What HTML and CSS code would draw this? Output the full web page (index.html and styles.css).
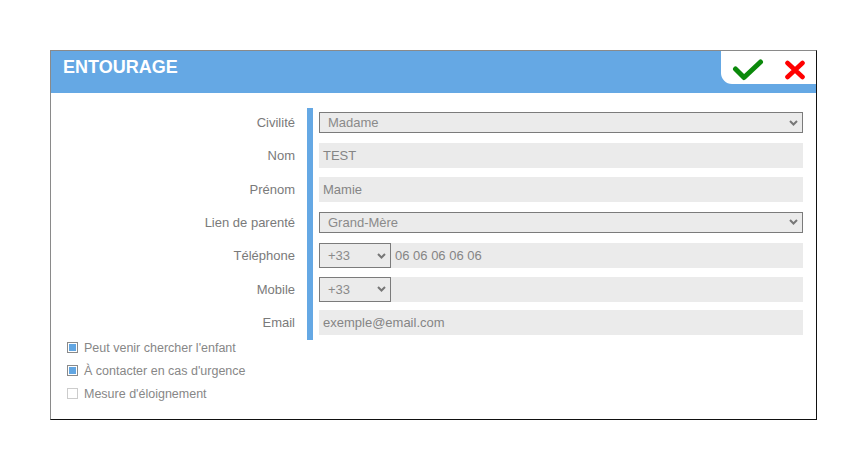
FILE: index.html
```html
<!DOCTYPE html>
<html lang="fr">
<head>
<meta charset="utf-8">
<title>Entourage</title>
<link rel="stylesheet" href="styles.css">
</head>
<body>
<div class="panel">
  <div class="header">
    <div class="title">ENTOURAGE</div>
    <div class="tab">
      <svg class="ico-ok" width="32" height="22" viewBox="0 0 32 22"><path d="M3.5 10 L12 18.5 L28.5 3" fill="none" stroke="#0b890b" stroke-width="5" stroke-linecap="round" stroke-linejoin="round"/></svg>
      <svg class="ico-no" width="22" height="20" viewBox="0 0 22 20"><path d="M3.5 3 L18.5 17 M18.5 3 L3.5 17" fill="none" stroke="#ff0000" stroke-width="4.6" stroke-linecap="round"/></svg>
    </div>
  </div>
  <div class="form">
    <div class="labels">
      <div class="lbl">Civilité</div>
      <div class="lbl">Nom</div>
      <div class="lbl">Prénom</div>
      <div class="lbl">Lien de parenté</div>
      <div class="lbl">Téléphone</div>
      <div class="lbl">Mobile</div>
      <div class="lbl">Email</div>
    </div>
    <div class="bar"></div>
    <div class="fields">
      <div class="row"><div class="sel sel-full">Madame</div></div>
      <div class="row"><div class="inp">TEST</div></div>
      <div class="row"><div class="inp">Mamie</div></div>
      <div class="row"><div class="sel sel-full">Grand-Mère</div></div>
      <div class="row"><div class="sel sel-code">+33</div><div class="inp">06 06 06 06 06</div></div>
      <div class="row"><div class="sel sel-code">+33</div><div class="inp"></div></div>
      <div class="row"><div class="inp">exemple@email.com</div></div>
    </div>
  </div>
  <div class="checks">
    <div class="check"><span class="box on"></span><span class="ctext">Peut venir chercher l'enfant</span></div>
    <div class="check"><span class="box on"></span><span class="ctext">À contacter en cas d'urgence</span></div>
    <div class="check"><span class="box"></span><span class="ctext">Mesure d'éloignement</span></div>
  </div>
</div>
</body>
</html>
```
FILE: styles.css
```css
html, body {
  margin: 0;
  padding: 0;
  background: #ffffff;
}
body {
  font-family: "Liberation Sans", Arial, sans-serif;
}
.panel {
  margin: 50px 0 0 50px;
  width: 765px;
  height: 368px;
  border: 1px solid;
  border-color: #8a8a8a #111111 #111111 #8a8a8a;
  background: #ffffff;
}
.header {
  height: 42px;
  background: #65a8e4;
  display: flex;
  justify-content: space-between;
  align-items: flex-start;
}
.title {
  color: #ffffff;
  font-weight: bold;
  font-size: 18px;
  line-height: 20px;
  padding: 6px 0 0 12px;
  letter-spacing: 0;
}
.tab {
  width: 95px;
  height: 33px;
  box-sizing: border-box;
  background: #ffffff;
  border-bottom-left-radius: 11px;
  display: flex;
  align-items: center;
  padding: 4px 0 0 11px;
  gap: 20px;
}
.tab svg { display: block; }
.form {
  display: flex;
  padding: 15px 13px 0 0;
}
.labels {
  width: 244px;
  display: flex;
  flex-direction: column;
  gap: 8.33px;
  padding-top: 2px;
}
.lbl {
  height: 25px;
  display: flex;
  align-items: center;
  justify-content: flex-end;
  font-size: 13px;
  color: #7a7a7a;
}
.bar {
  width: 6px;
  background: #65a8e4;
  margin: 0 6px 0 12px;
}
.fields {
  flex: 1;
  display: flex;
  flex-direction: column;
  gap: 8.33px;
  padding: 2px 0 5px 0;
}
.row {
  height: 25px;
  display: flex;
  align-items: center;
}
.inp {
  flex: 1;
  height: 25px;
  box-sizing: border-box;
  background: #ebebeb;
  padding: 0 5px 0 4px;
  font-size: 13px;
  color: #858585;
  display: flex;
  align-items: center;
}
.sel {
  box-sizing: border-box;
  border: 1px solid #7b7b7b;
  background-color: #ebebeb;
  background-image: url("data:image/svg+xml;utf8,<svg xmlns='http://www.w3.org/2000/svg' width='9' height='6' viewBox='0 0 9 6'><path d='M1 1 L4.5 4.5 L8 1' fill='none' stroke='%23777777' stroke-width='2'/></svg>");
  background-repeat: no-repeat;
  background-position: right 4px center;
  background-size: 9px 6px;
  padding-left: 8px;
  font-size: 13px;
  color: #8a8a8a;
  display: flex;
  align-items: center;
}
.sel-full {
  flex: 1;
  height: 21px;
}
.sel-code {
  width: 72px;
  height: 25px;
  flex: none;
}
.checks {
  padding-left: 16px;
  display: flex;
  flex-direction: column;
  gap: 6.8px;
}
.check {
  height: 16px;
  display: flex;
  align-items: center;
  gap: 6px;
}
.box {
  width: 11px;
  height: 11px;
  box-sizing: border-box;
  border: 1px solid #cccccc;
  background: #ffffff;
  flex: none;
}
.box.on {
  border-color: #8a8a8a;
  background: #62a6e2;
  box-shadow: inset 0 0 0 1px #ffffff;
}
.ctext {
  font-size: 12.5px;
  color: #878787;
}
```
